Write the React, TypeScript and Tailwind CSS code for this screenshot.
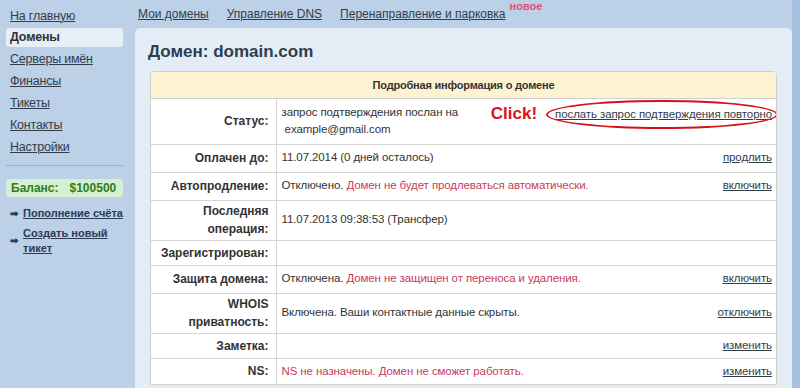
const sideLinks = ["Серверы имён", "Финансы", "Тикеты", "Контакты", "Настройки"];

type Row = {
  label: string[];
  h: string;
  value?: React.ReactNode;
  action?: string;
};

const red = "text-[#c93a5c]";

const rows: Row[] = [
  {
    label: ["Оплачен до:"],
    h: "h-[28px]",
    value: "11.07.2014 (0 дней осталось)",
    action: "продлить",
  },
  {
    label: ["Автопродление:"],
    h: "h-[28px]",
    value: (
      <>
        Отключено. <span className={red}>Домен не будет продлеваться автоматически.</span>
      </>
    ),
    action: "включить",
  },
  {
    label: ["Последняя", "операция:"],
    h: "h-[40px]",
    value: "11.07.2013 09:38:53 (Трансфер)",
  },
  { label: ["Зарегистрирован:"], h: "h-[25px]" },
  {
    label: ["Защита домена:"],
    h: "h-[28px]",
    value: (
      <>
        Отключена. <span className={red}>Домен не защищен от переноса и удаления.</span>
      </>
    ),
    action: "включить",
  },
  {
    label: ["WHOIS", "приватность:"],
    h: "h-[40px]",
    value: "Включена. Ваши контактные данные скрыты.",
    action: "отключить",
  },
  { label: ["Заметка:"], h: "h-[25px]", action: "изменить" },
  {
    label: ["NS:"],
    h: "h-[26px]",
    value: <span className={red}>NS не назначены. Домен не сможет работать.</span>,
    action: "изменить",
  },
];

export default function App() {
  return (
    <div className="flex h-[388px] w-[800px] overflow-hidden bg-[#bcd0e7] font-['Liberation_Sans',Arial,sans-serif] text-[#333]">
      {/* Sidebar */}
      <div className="w-[135px] shrink-0 pl-[6px] pr-[12px] pt-[5px] text-[12.5px] tracking-[-0.2px]">
        <div className="flex h-[22px] items-center px-[4px]">
          <a className="text-[#333d4a] underline">На главную</a>
        </div>
        <div className="my-[1px] flex h-[19px] items-center rounded-[3px] bg-[#e6eef7] px-[4px] font-bold text-[#333]">
          Домены
        </div>
        {sideLinks.map((l) => (
          <div key={l} className="flex h-[22px] items-center px-[4px]">
            <a className="text-[#333d4a] underline">{l}</a>
          </div>
        ))}
        <div className="mt-[7px] border-t border-[#9ab2cc]" />
        <div className="mt-[13px] flex h-[18px] items-center gap-[11px] rounded-[3px] bg-[#d4efd1] px-[5px] text-[12px] font-bold tracking-normal text-[#2f7d1e]">
          <span>Баланс:</span>
          <span>$100500</span>
        </div>
        <div className="mt-[8px] flex items-center gap-[5px] pl-[4px] text-[11px] font-bold tracking-normal">
          <span className="text-[10px] text-[#2b3a55]">➡</span>
          <a className="whitespace-nowrap text-[#2b3a55] underline">Пополнение счёта</a>
        </div>
        <div className="mt-[4px] flex items-center gap-[5px] pl-[4px] text-[11px] font-bold leading-[15px] tracking-normal">
          <span className="text-[10px] text-[#2b3a55]">➡</span>
          <a className="text-[#2b3a55] underline">
            Создать новый
            <br />
            тикет
          </a>
        </div>
      </div>

      {/* Main */}
      <div className="flex min-w-0 flex-1 flex-col">
        <div className="flex h-[28px] items-center pl-[3px] text-[12px]">
          <a className="text-[#333d4a] underline">Мои домены</a>
          <a className="ml-[18px] text-[#333d4a] underline">Управление DNS</a>
          <a className="ml-[18px] text-[#333d4a] underline">Перенаправление и парковка</a>
          <span className="ml-[4px] -translate-y-[8px] text-[11px] font-bold text-[#e0506e]">новое</span>
        </div>
        <div className="flex-1 rounded-tl-[5px] rounded-tr-[5px] bg-[#e4ecf5] pl-[13px] pr-[15px] pt-[13px]">
          <h1 className="mb-[8px] text-[17px] font-bold leading-[22px] text-[#2c3e50]">
            Домен: domain.com
          </h1>
          <div className="ml-[2px] overflow-hidden rounded-t-[4px] border border-[#cfcfcf] bg-white text-[11.5px] tracking-[-0.1px]">
            <div className="flex h-[27px] items-center justify-center border-b border-[#cfcfcf] bg-[#fdf3d3] text-[11px] font-bold tracking-[-0.2px]">
              Подробная информация о домене
            </div>
            <table className="w-full border-collapse">
              <tbody>
                <tr className="h-[45px] border-b border-[#d5d5d5]">
                  <td className="w-[125px] border-r border-[#d5d5d5] pr-[7px] text-right text-[12px] font-bold tracking-normal">
                    Статус:
                  </td>
                  <td className="pl-[5px] pr-[4px]">
                    <div className="flex items-start justify-between">
                      <div className="leading-[17px]">
                        запрос подтверждения послан на
                        <br />
                        &nbsp;example@gmail.com
                      </div>
                      <div className="flex items-center gap-[18px]">
                        <span className="text-[17px] font-bold leading-[20px] tracking-normal text-[#e0101e]">Click!</span>
                        <span className="relative">
                          <a className="text-[#333d4a] underline">послать запрос подтверждения повторно</a>
                          <span className="absolute -bottom-[6px] -left-[9px] -right-[6px] -top-[6px] rounded-[50%] border-2 border-[#d8101c]" />
                        </span>
                      </div>
                    </div>
                  </td>
                </tr>
                {rows.map((r, i) => (
                  <tr
                    key={r.label.join()}
                    className={`${r.h} ${i < rows.length - 1 ? "border-b border-[#d5d5d5]" : ""}`}
                  >
                    <td className="w-[125px] border-r border-[#d5d5d5] pr-[7px] text-right text-[12px] font-bold leading-[18px] tracking-normal">
                      {r.label.map((l) => (
                        <div key={l}>{l}</div>
                      ))}
                    </td>
                    <td className="pl-[5px] pr-[4px]">
                      <div className="flex items-center justify-between">
                        <span>{r.value}</span>
                        {r.action && <a className="text-[#333d4a] underline">{r.action}</a>}
                      </div>
                    </td>
                  </tr>
                ))}
              </tbody>
            </table>
          </div>
        </div>
      </div>
      <div className="w-[8px] shrink-0 bg-[#a7c1e0]" />
    </div>
  );
}
